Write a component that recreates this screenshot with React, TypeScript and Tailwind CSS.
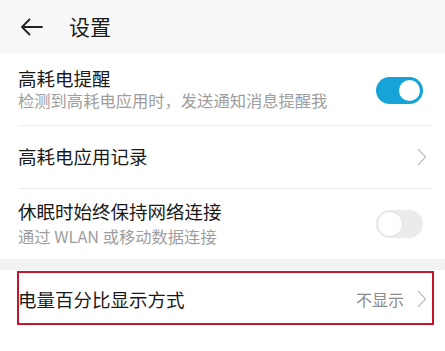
import React from 'react';

const FONT = { fontFamily: '"Noto Sans CJK SC", "Noto Sans", sans-serif' };

const Toggle: React.FC<{ on: boolean }> = ({ on }) =>
  on ? (
    <div className="w-[47px] h-[27px] rounded-full bg-[#16a3d8] flex items-center justify-end pr-[3px]">
      <div className="w-[21px] h-[21px] rounded-full bg-white" />
    </div>
  ) : (
    <div className="w-[47px] h-[28px] rounded-full bg-[#ebebeb] flex items-center pl-[1px]">
      <div className="w-[26px] h-[26px] rounded-full bg-white border border-[#e2e2e2]" />
    </div>
  );

const Chevron = () => (
  <svg width="10" height="18" viewBox="0 0 10 18" fill="none">
    <path d="M1.5 1.5 L8.5 9 L1.5 16.5" stroke="#c4c4c4" strokeWidth="1.4" strokeLinecap="round" strokeLinejoin="round" />
  </svg>
);

const Divider = () => <div className="ml-[18px] mr-[13px] h-px bg-[#ededed]" />;

export default function App() {
  return (
    <div className="w-[445px] h-[351px] bg-white overflow-hidden" style={FONT}>
      {/* Header */}
      <div className="h-[53px] bg-[#f7f7f7] flex items-center">
        <svg className="ml-[20px] mt-[1px]" width="24" height="18" viewBox="0 0 24 18" fill="none">
          <path d="M22 9 H2 M9.5 1.5 L2 9 L9.5 16.5" stroke="#222" strokeWidth="1.8" strokeLinecap="round" strokeLinejoin="round" />
        </svg>
        <span className="ml-[25px] text-[21px] leading-none text-[#1c1c1c]">设置</span>
      </div>

      {/* 高耗电提醒 */}
      <div className="h-[72px] pl-[18px] pr-[22px] flex items-center justify-between">
        <div className="flex flex-col gap-[1px]">
          <span className="text-[18.5px] leading-[21px] text-[#1a1a1a]">高耗电提醒</span>
          <span className="text-[16.3px] leading-[20px] text-[#9e9e9e]">检测到高耗电应用时，发送通知消息提醒我</span>
        </div>
        <div className="mt-[3px]">
          <Toggle on />
        </div>
      </div>
      <Divider />

      {/* 高耗电应用记录 */}
      <div className="h-[62px] pl-[18px] pr-[18px] flex items-center justify-between">
        <span className="-mt-[3px] text-[18.5px] leading-[22px] text-[#1a1a1a]">高耗电应用记录</span>
        <Chevron />
      </div>
      <Divider />

      {/* 休眠时始终保持网络连接 */}
      <div className="h-[70px] pl-[18px] pr-[22px] flex items-center justify-between">
        <div className="-mt-[2px] flex flex-col gap-[4px]">
          <span className="text-[18.5px] leading-[22px] text-[#1a1a1a]">休眠时始终保持网络连接</span>
          <span className="text-[16.3px] leading-[20px] text-[#9e9e9e]">通过 WLAN 或移动数据连接</span>
        </div>
        <Toggle on={false} />
      </div>

      <div className="h-[11px] bg-[#f2f2f2]" />

      {/* 电量百分比显示方式 */}
      <div className="relative h-[60px] pl-[18px] pr-[18px] flex items-center justify-between">
        <span className="-mt-[2px] text-[18.5px] leading-[22px] text-[#1a1a1a]">电量百分比显示方式</span>
        <div className="-mt-[2px] flex items-center gap-[13px]">
          <span className="text-[16px] leading-[20px] text-[#8c8c8c]">不显示</span>
          <Chevron />
        </div>
        <div className="absolute left-[17px] top-[1px] w-[417px] h-[54px] border-2 border-[#c8142c]" />
      </div>
    </div>
  );
}
